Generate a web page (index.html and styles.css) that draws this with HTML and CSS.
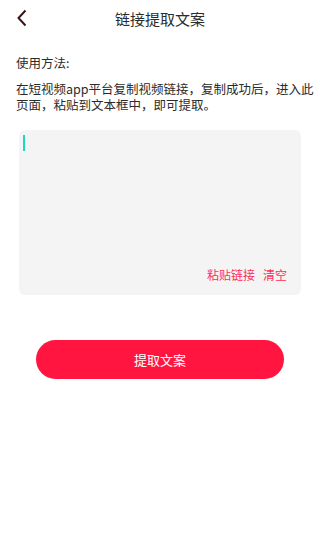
FILE: index.html
```html
<!DOCTYPE html>
<html>
<head>
    <title>链接提取文案</title>
    <link rel="stylesheet" href="styles.css">
</head>
<body>
    <div class="header">
        <a class="back" href="#">
            <svg width="12" height="18" viewBox="0 0 12 18">
                <polyline points="9.5,1.5 2.5,9 9.5,16.5" fill="none" stroke="#3d1416" stroke-width="2"/>
            </svg>
        </a>
        <div class="title">链接提取文案</div>
        <div class="spacer"></div>
    </div>

    <div class="usage">
        <div class="usage-title">使用方法:</div>
        <div class="usage-text">在短视频app平台复制视频链接，复制成功后，进入此页面，粘贴到文本框中，即可提取。</div>
    </div>

    <div class="input-box">
        <div class="cursor"></div>
        <div class="actions">
            <a href="#">粘贴链接</a>
            <a href="#">清空</a>
        </div>
    </div>

    <div class="submit">提取文案</div>
</body>
</html>
```

FILE: styles.css
```css
body {
    font-family: "Noto Sans CJK SC", "Noto Sans", sans-serif;
    margin: 0;
    padding: 0;
    background-color: #fff;
    color: #333;
}

.header {
    height: 36px;
    display: flex;
    align-items: center;
}

.back {
    width: 40px;
    display: flex;
    justify-content: flex-start;
    padding-left: 16px;
    box-sizing: border-box;
}

.back svg {
    display: block;
}

.title {
    flex: 1;
    text-align: center;
    font-size: 15px;
    color: #2b2b2b;
}

.spacer {
    width: 40px;
}

.usage {
    padding: 0 2px 0 16px;
    margin-top: 19px;
    font-size: 12.5px;
    line-height: 16px;
    color: #2b2b2b;
}

.usage-text {
    margin-top: 10px;
}

.input-box {
    margin: 17px 0 0 19px;
    width: 282px;
    height: 165px;
    box-sizing: border-box;
    padding: 5px 14px 12px 4px;
    background-color: #f4f4f4;
    border-radius: 6px;
    display: flex;
    flex-direction: column;
    justify-content: space-between;
}

.cursor {
    width: 2px;
    height: 16px;
    background-color: #1fd8c1;
}

.actions {
    display: flex;
    justify-content: flex-end;
    gap: 8px;
    font-size: 12px;
    line-height: 16px;
}

.actions a {
    color: #ff2d55;
    text-decoration: none;
}

.submit {
    margin: 45px 0 0 36px;
    width: 248px;
    height: 39px;
    border-radius: 20px;
    background-color: #ff1540;
    color: #fff;
    font-size: 13px;
    display: flex;
    align-items: center;
    justify-content: center;
}
```
